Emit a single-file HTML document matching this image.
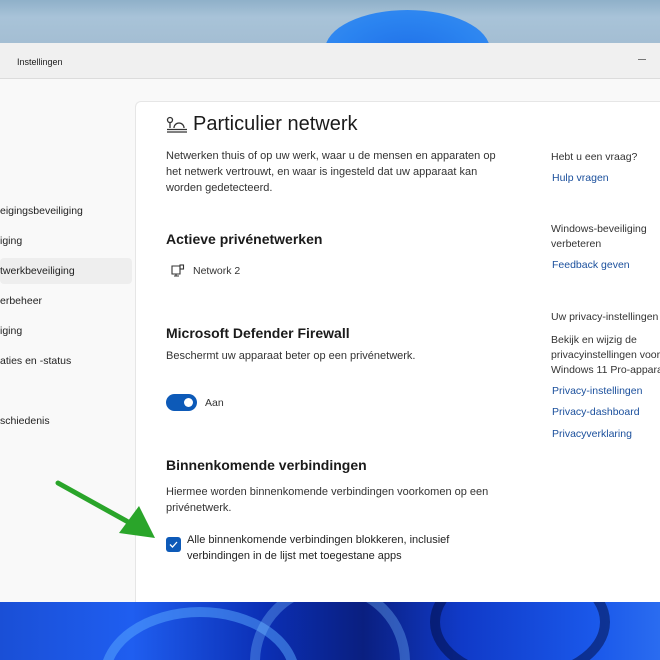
<!DOCTYPE html>
<html><head><meta charset="utf-8"><style>
*{margin:0;padding:0;box-sizing:border-box}
html,body{width:660px;height:660px;overflow:hidden}
body{position:relative;font-family:"Liberation Sans",sans-serif;color:#1b1b1b;background:#a9c2d6}
.top{position:absolute;left:0;top:0;width:660px;height:43px;background:linear-gradient(180deg,#8fb0c9,#a8c3d8 40%,#a4bed3);overflow:hidden}
.top .bloom{position:absolute;left:325px;top:10px;width:165px;height:80px;border-radius:50%;background:radial-gradient(ellipse at 50% 60%,#1f6fe8,#2b84f0 60%,#3a8ef0)}
.bot{position:absolute;left:0;top:602px;width:660px;height:58px;background:linear-gradient(90deg,#1a4fd6,#1f5ef0 20%,#0b2fb5 40%,#0a1f80 55%,#103ac8 70%,#1a58ea 90%,#2a6cf0);overflow:hidden}
.bot i{position:absolute;border-radius:50%;border:10px solid rgba(90,170,255,.5)}
.win{position:absolute;left:0;top:43px;width:660px;height:559px;background:#f9f9f9}
.title{height:36px;background:#f0f0f0;border-bottom:1px solid #dcdcdc;font-size:9px;padding:14px 0 0 17px;position:relative}
.title .min{position:absolute;left:638px;top:16px;width:8px;height:1px;background:#777}
.side div{position:absolute;left:0;font-size:10.5px;color:#222}
.sel{position:absolute;left:0;top:258px;width:132px;height:26px;background:#eeeeee;border-radius:4px}
.card{position:absolute;left:135px;top:101px;width:530px;height:501px;background:#fff;border:1px solid #e6e6e6;border-radius:6px 0 0 0;border-right:none;border-bottom:none}
.a{position:absolute;white-space:nowrap}
h1{position:absolute;left:193px;top:113px;font-size:20px;font-weight:normal;color:#1b1b1b}
.p{font-size:11px;color:#333;line-height:16px}
h2{position:absolute;font-size:14px;font-weight:bold;color:#1b1b1b}
.l{color:#1a4f9c;font-size:10.5px}
.r{font-size:10.5px;color:#333;line-height:15px}
</style></head><body>
<div class="top"><div class="bloom"></div></div>
<div class="win">
<div class="title">Instellingen<div class="min"></div></div>
</div>
<div class="sel"></div>
<div class="side">
<div style="top:205px">eigingsbeveiliging</div>
<div style="top:235px">iging</div>
<div style="top:265px">twerkbeveiliging</div>
<div style="top:295px">erbeheer</div>
<div style="top:325px">iging</div>
<div style="top:355px">aties en -status</div>
<div style="top:415px">schiedenis</div>
</div>
<div class="card"></div>
<svg class="a" style="left:166px;top:116px" width="22" height="18" viewBox="0 0 22 18" fill="none" stroke="#333" stroke-width="1.3"><circle cx="4" cy="4" r="2.5"/><path d="M4 6.5V12M8 12a5 5 0 0 1 10 0M1 13.5h20M1 16h20"/></svg>
<h1>Particulier netwerk</h1>
<div class="a p" style="left:166px;top:148px">Netwerken thuis of op uw werk, waar u de mensen en apparaten op<br>het netwerk vertrouwt, en waar is ingesteld dat uw apparaat kan<br>worden gedetecteerd.</div>
<h2 style="left:166px;top:231px">Actieve privénetwerken</h2>
<svg class="a" style="left:171px;top:264px" width="14" height="14" viewBox="0 0 14 14" fill="none" stroke="#333" stroke-width="1.1"><path d="M1 2h8v8H1zM3 12h5M5 10v2"/><rect x="9" y="1" width="3.5" height="4"/></svg>
<div class="a" style="left:193px;top:265px;font-size:10.5px;color:#333">Network 2</div>
<h2 style="left:166px;top:325px">Microsoft Defender Firewall</h2>
<div class="a p" style="left:166px;top:348px">Beschermt uw apparaat beter op een privénetwerk.</div>
<div class="a" style="left:166px;top:394px;width:31px;height:17px;border-radius:9px;background:#0d5ab8"><div style="position:absolute;left:18px;top:4px;width:9px;height:9px;border-radius:50%;background:#fff"></div></div>
<div class="a" style="left:205px;top:397px;font-size:10.5px;color:#333">Aan</div>
<h2 style="left:166px;top:457px">Binnenkomende verbindingen</h2>
<div class="a p" style="left:166px;top:484px">Hiermee worden binnenkomende verbindingen voorkomen op een<br>privénetwerk.</div>
<div class="a" style="left:166px;top:537px;width:15px;height:15px;border-radius:3px;background:#0d5ab8"><svg width="15" height="15" viewBox="0 0 15 15"><path d="M4 7.5l2.5 2.5 4.5-5" fill="none" stroke="#fff" stroke-width="1.3"/></svg></div>
<div class="a p" style="left:187px;top:532px;color:#222">Alle binnenkomende verbindingen blokkeren, inclusief<br>verbindingen in de lijst met toegestane apps</div>
<svg class="a" style="left:55px;top:478px" width="105" height="65" viewBox="0 0 105 65"><path d="M3 5L75 45" stroke="#2aa52a" stroke-width="5" stroke-linecap="round"/><path d="M64 55L100 60L84 28Z" fill="#2aa52a"/></svg>
<div class="a r" style="left:551px;top:150px">Hebt u een vraag?</div>
<div class="a l" style="left:552px;top:172px">Hulp vragen</div>
<div class="a r" style="left:551px;top:222px">Windows-beveiliging<br>verbeteren</div>
<div class="a l" style="left:552px;top:259px">Feedback geven</div>
<div class="a r" style="left:551px;top:310px">Uw privacy-instellingen</div>
<div class="a r" style="left:551px;top:333px">Bekijk en wijzig de<br>privacyinstellingen voor<br>Windows 11 Pro-apparaat</div>
<div class="a l" style="left:552px;top:385px">Privacy-instellingen</div>
<div class="a l" style="left:552px;top:406px">Privacy-dashboard</div>
<div class="a l" style="left:552px;top:428px">Privacyverklaring</div>
<div class="bot"><i style="left:100px;top:5px;width:200px;height:140px"></i><i style="left:250px;top:-20px;width:160px;height:160px;border-color:rgba(120,190,255,.35)"></i><i style="left:430px;top:-40px;width:180px;height:120px;border-color:rgba(0,10,60,.5)"></i></div>
</body></html>
